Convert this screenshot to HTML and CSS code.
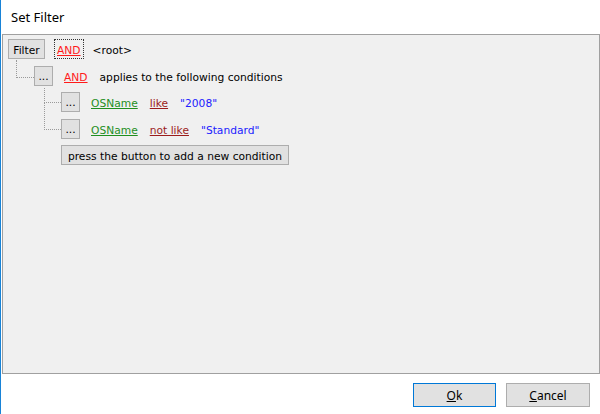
FILE: index.html
```html
<!DOCTYPE html>
<html>
<head>
<meta charset="utf-8">
<link rel="stylesheet" href="styles.css">
</head>
<body>
<div class="window">
  <div class="titlebar">Set Filter</div>
  <div class="panel">
    <div class="tree">
      <div class="row">
        <span class="btn filter">Filter</span>
        <span class="tok group focus">AND</span>
        <span class="tok plain">&lt;root&gt;</span>
      </div>
      <div class="row">
        <span class="branch b1"></span>
        <span class="btn dots">...</span>
        <span class="tok group">AND</span>
        <span class="tok plain">applies to the following conditions</span>
      </div>
      <div class="row">
        <span class="branch b2"></span>
        <span class="btn dots">...</span>
        <span class="tok field">OSName</span>
        <span class="tok oper">like</span>
        <span class="tok value">"2008"</span>
      </div>
      <div class="row">
        <span class="branch b3"></span>
        <span class="btn dots">...</span>
        <span class="tok field">OSName</span>
        <span class="tok oper">not like</span>
        <span class="tok value">"Standard"</span>
      </div>
      <div class="row">
        <span class="btn add">press the button to add a new condition</span>
      </div>
    </div>
  </div>
  <div class="footer">
    <span class="dlg default"><u>O</u>k</span>
    <span class="dlg cancel"><u>C</u>ancel</span>
  </div>
</div>
</body>
</html>
```
FILE: styles.css
```css
html, body {
  margin: 0;
  background: #ffffff;
}

.window {
  width: 599px;
  height: 414px;
  border-left: 1px solid #1883d7;
  display: flex;
  flex-direction: column;
  font-family: "DejaVu Sans", Verdana, sans-serif;
  color: #000;
}

.titlebar {
  height: 34px;
  box-sizing: border-box;
  padding: 8px 0 0 10px;
  font: 13px/18px "Noto Sans", sans-serif;
  color: #000;
}

.panel {
  margin-left: 1px;
  height: 340px;
  box-sizing: border-box;
  border: 1px solid #a0a0a0;
  background: #f0f0f0;
  padding: 4px 0 0 5px;
}

.tree {
  display: flex;
  flex-direction: column;
  gap: 6.5px;
}

.row {
  display: flex;
  align-items: center;
  gap: 6px;
  height: 20px;
  font-size: 10.7px;
}

.branch {
  align-self: flex-start;
  box-sizing: content-box;
  border-left: 1px dotted #9a9a9a;
  border-bottom: 1px dotted #9a9a9a;
  margin-right: -6px;
}

.b1 {
  margin-left: 8px;
  width: 17px;
  height: 17px;
  margin-top: -6px;
}

.b2 {
  margin-left: 36px;
  width: 16px;
  height: 14px;
  margin-top: -4px;
}

.b3 {
  margin-left: 36px;
  width: 16px;
  height: 26px;
  margin-top: -16px;
}

.btn {
  box-sizing: border-box;
  height: 20px;
  border: 1px solid #adadad;
  background: #e1e1e1;
  display: flex;
  align-items: center;
  justify-content: center;
  font-size: 10.7px;
  white-space: nowrap;
  padding-top: 2px;
}

.filter {
  width: 37px;
  margin-right: 3px;
}

.dots {
  width: 19px;
  margin-right: 2px;
  line-height: 1;
  padding-top: 3px;
}

.add {
  margin-left: 53px;
  width: 228px;
}

.tok {
  box-sizing: border-box;
  height: 20px;
  line-height: 22px;
  padding: 0 2px;
  border: 1px dotted transparent;
  white-space: nowrap;
}

.focus {
  border-color: #333;
}

.group {
  color: #ff1a1a;
  text-decoration: underline;
}

.field {
  color: #1f8f1f;
  text-decoration: underline;
}

.oper {
  color: #9b1c1c;
  text-decoration: underline;
}

.value {
  color: #2020ff;
}

.footer {
  display: flex;
  justify-content: flex-end;
  gap: 10px;
  padding: 9px 10px 0 0;
}

.dlg {
  box-sizing: border-box;
  width: 83px;
  height: 24px;
  border: 1px solid #adadad;
  background: #e1e1e1;
  display: flex;
  align-items: center;
  justify-content: center;
  font: 12px "Noto Sans", sans-serif;
}

.cancel {
  width: 84px;
}

.default {
  border-color: #0078d7;
}

.dlg u {
  text-decoration: underline;
}
```
